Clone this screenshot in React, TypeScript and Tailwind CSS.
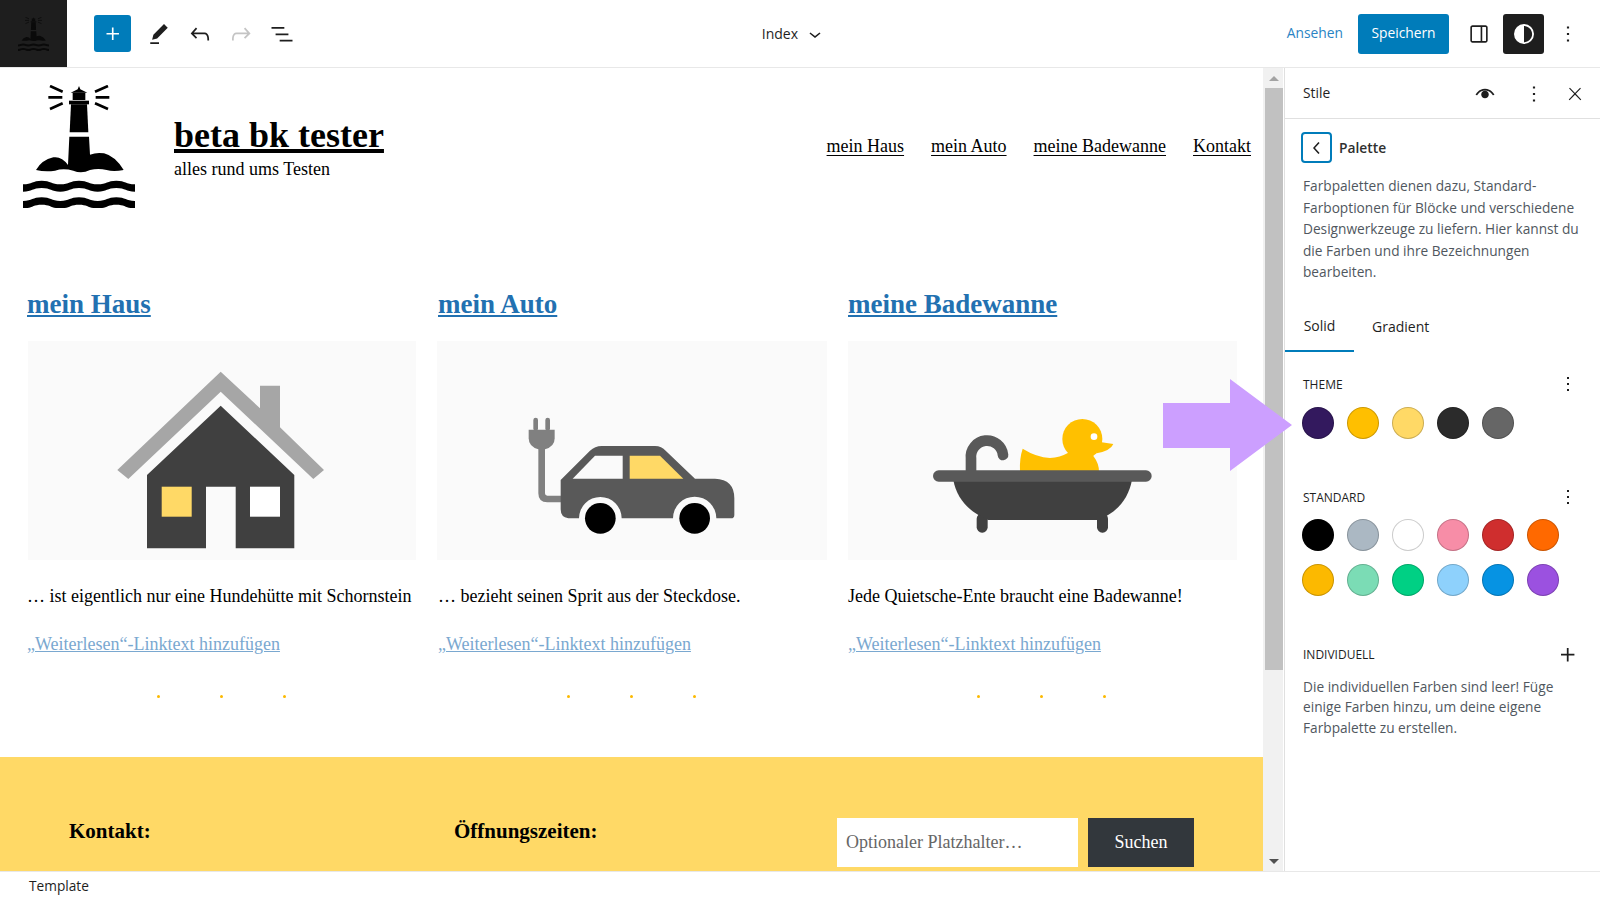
const WP = ({ d, size = 28, className = "", rule }: { d: string; size?: number; className?: string; rule?: "evenodd" }) => (
  <svg width={size} height={size} viewBox="0 0 24 24" className={className} fill="currentColor">
    <path d={d} fillRule={rule} clipRule={rule} />
  </svg>
);

const icons = {
  plus: "M11 12.5V17.5H12.5V12.5H17.5V11H12.5V6H11V11H6V12.5H11Z",
  pencil: "m19 7-3-3-8.5 8.5-1 4 4-1L19 7Zm-7 11.5H5V20h7v-1.5Z",
  undo: "M18.3 11.7c-.6-.6-1.4-.9-2.3-.9H6.7l2.9-3.3-1.1-1-4.5 5L8.5 16l1-1-2.7-2.7H16c.5 0 .9.2 1.3.5 1 1 1 3.4 1 4.5v.3h1.5v-.2c0-1.5 0-4.3-1.5-5.7z",
  redo: "M15.6 6.5l-1.1 1 2.9 3.3H8c-.9 0-1.7.3-2.3.9-1.4 1.5-1.4 4.2-1.4 5.6v.2h1.5v-.3c0-1.1 0-3.5 1-4.5.3-.3.7-.5 1.3-.5h9.2L14.5 15l1.1 1.1 4.6-4.6-4.6-5z",
  list: "M3 6h11v1.5H3V6Zm3.5 5.5h11V13h-11v-1.5ZM21 17H10v1.5h11V17Z",
  drawer: "M18 4H6c-1.1 0-2 .9-2 2v12c0 1.1.9 2 2 2h12c1.1 0 2-.9 2-2V6c0-1.1-.9-2-2-2zM6 5.5h7.5v13H6c-.3 0-.5-.2-.5-.5V6c0-.3.2-.5.5-.5zM18.5 18c0 .3-.2.5-.5.5h-3v-13h3c.3 0 .5.2.5.5v12z",
  styles: "M12 4a8 8 0 1 0 0 16 8 8 0 0 0 0-16zm0 1.5c3.6 0 6.5 2.9 6.5 6.5s-2.9 6.5-6.5 6.5v-13z",
  more: "M13 19h-2v-2h2v2zm0-6h-2v-2h2v2zm0-6h-2V5h2v2z",
  close: "M13 11.8l6.1-6.3-1-1-6.1 6.2-6.1-6.2-1 1 6.1 6.3-6.5 6.7 1 1 6.5-6.6 6.5 6.6 1-1z",
  left: "M14.6 7l-1.2-1L8 12l5.4 6 1.2-1-4.6-5z",
  down: "M17.5 11.6L12 16l-5.5-4.4.9-1.2L12 14l4.5-3.6 1 1.2z",
  eye: "M3.99961 13C4.67043 13.3354 4.6703 13.3357 4.67017 13.3359L4.67298 13.3305C4.67621 13.3242 4.68184 13.3135 4.68988 13.2985C4.70595 13.2686 4.7316 13.2218 4.76695 13.1608C4.8377 13.0385 4.94692 12.8592 5.09541 12.6419C5.39312 12.2062 5.84436 11.624 6.45435 11.0431C7.67308 9.88241 9.49719 8.75 11.9996 8.75C14.502 8.75 16.3261 9.88241 17.5449 11.0431C18.1549 11.624 18.6061 12.2062 18.9038 12.6419C19.0523 12.8592 19.1615 13.0385 19.2323 13.1608C19.2676 13.2218 19.2933 13.2686 19.3093 13.2985C19.3174 13.3135 19.323 13.3242 19.3262 13.3305L19.3291 13.3359C19.3289 13.3357 19.3288 13.3354 19.9996 13C20.6704 12.6646 20.6703 12.6643 20.6701 12.664L20.6697 12.6632L20.6688 12.6614L20.6662 12.6563L20.6583 12.6408C20.6517 12.6282 20.6427 12.6108 20.631 12.5892C20.6078 12.5459 20.5744 12.4852 20.5306 12.4096C20.4432 12.2584 20.3141 12.0471 20.1423 11.7956C19.7994 11.2938 19.2819 10.626 18.5794 9.9569C17.1731 8.61759 15.0306 7.25 11.9996 7.25C8.96859 7.25 6.82609 8.61759 5.41987 9.9569C4.71736 10.626 4.19984 11.2938 3.85694 11.7956C3.68511 12.0471 3.55605 12.2584 3.4686 12.4096C3.42484 12.4852 3.39142 12.5459 3.36818 12.5892C3.35656 12.6108 3.34748 12.6282 3.34092 12.6408L3.33297 12.6563L3.33041 12.6614L3.32948 12.6632L3.32911 12.664C3.32894 12.6643 3.32879 12.6646 3.99961 13ZM11.9996 16C13.9326 16 15.4996 14.433 15.4996 12.5C15.4996 10.567 13.9326 9 11.9996 9C10.0666 9 8.49961 10.567 8.49961 12.5C8.49961 14.433 10.0666 16 11.9996 16Z",
};

const Lighthouse = ({ w, h, color, className = "" }: { w: number; h: number; color: string; className?: string }) => (
  <svg width={w} height={h} viewBox="69 45 336 369" className={className} fill={color}>
    <g stroke={color} strokeWidth="8" fill="none">
      <path d="M150 48L188 65M145 82H187M150 117L188 100M324 48L285 65M328 82H287M324 117L285 100" />
    </g>
    <path d="M237 48L241 58L262 68H212L233 58Z" />
    <rect x="218" y="68" width="38" height="22" />
    <rect x="207" y="92" width="60" height="11" />
    <path d="M213 103H261L265 187H209Z" />
    <path d="M208 200H267L270 254Q290 246 312 250Q345 258 371 300Q340 306 320 300Q295 294 270 300Q245 312 220 302Q190 294 165 302Q135 306 108 300Q125 270 160 262Q185 258 204 285Z" />
    <path d="M69 343c28 0 28 -11 56 -11s28 11 56 11c28 0 28 -11 56 -11s28 11 56 11c28 0 28 -11 56 -11s28 11 56 11V365c-28 0 -28 -11 -56 -11s-28 11 -56 11c-28 0 -28 -11 -56 -11s-28 11 -56 11c-28 0 -28 -11 -56 -11s-28 11 -56 11Z" />
    <path d="M69 393c28 0 28 -11 56 -11s28 11 56 11c28 0 28 -11 56 -11s28 11 56 11c28 0 28 -11 56 -11s28 11 56 11V415c-28 0 -28 -11 -56 -11s-28 11 -56 11c-28 0 -28 -11 -56 -11s-28 11 -56 11c-28 0 -28 -11 -56 -11s-28 11 -56 11Z" />
  </svg>
);

const House = () => (
  <svg viewBox="28 341 388 219" className="block w-full h-full">
    <polygon fill="#a6a6a6" points="220.7,371.7 260,408.3 260,385.7 280,385.7 280,427.3 324,470 313.3,479 220.7,391.7 128.3,479 117.3,470" />
    <polygon fill="#404040" points="220.7,405.7 294.3,475 294.3,548.3 235.7,548.3 235.7,486.7 206,486.7 206,548.3 147,548.3 147,475" />
    <rect x="161.7" y="486.7" width="30" height="30" fill="#ffd966" />
    <rect x="250" y="486.7" width="30" height="30" fill="#ffffff" />
  </svg>
);

const Car = () => (
  <svg viewBox="437 341 390 219" className="block w-full h-full">
    <g transform="translate(500 390) scale(0.33333)">
      <rect x="100" y="83" width="14" height="40" rx="7" fill="#808080" />
      <rect x="136" y="83" width="14" height="40" rx="7" fill="#808080" />
      <path d="M86 119H164V145Q164 170 135 178H115Q86 170 86 145Z" fill="#808080" />
      <path d="M125 175V310Q125 327 142 327H190" stroke="#808080" strokeWidth="20" fill="none" />
      <path d="M182 270L270 182Q285 168 305 168H465Q485 168 497 182L585 266H645Q703 268 703 325V375Q703 385 693 385H649A65 65 0 0 0 519 385H365A64 64 0 0 0 237 385H205Q182 382 182 358Z" fill="#595959" />
      <path d="M218 266L285 197H368V266Z" fill="#fafafa" />
      <path d="M389 197H480L550 266H389Z" fill="#ffd966" />
      <circle cx="301" cy="385" r="46" fill="#000" />
      <circle cx="584" cy="385" r="46" fill="#000" />
    </g>
  </svg>
);

const Tub = () => (
  <svg viewBox="848 341 389 219" className="block w-full h-full">
    <g transform="translate(920 400) scale(0.33333)">
      <path d="M153 215V175A48 48 0 0 1 249 165" stroke="#595959" strokeWidth="32" fill="none" strokeLinecap="round" />
      <circle cx="487" cy="117" r="60" fill="#ffc000" />
      <path d="M535 125L580 132Q572 152 530 160Z" fill="#ffc000" />
      <path d="M300 215Q298 175 308 146Q350 172 390 174Q420 172 445 158L520 168Q537 190 537 215Z" fill="#ffc000" />
      <circle cx="522" cy="110" r="10" fill="#fff" />
      <rect x="170" y="340" width="33" height="58" rx="16" fill="#404040" />
      <rect x="531" y="340" width="33" height="58" rx="16" fill="#404040" />
      <path d="M100 240H636C625 295 595 335 535 360H205C145 335 110 295 100 240Z" fill="#404040" />
      <rect x="39" y="211" width="656" height="34" rx="17" fill="#595959" />
    </g>
  </svg>
);

const Swatch = ({ c }: { c: string }) => (
  <div className="w-8 h-8 rounded-full border border-black/20" style={{ backgroundColor: c }} />
);

const columns = [
  { title: "mein Haus", text: "… ist eigentlich nur eine Hundehütte mit Schornstein", art: <House />, box: "ml-px w-[388px]", dots: "pl-[130px]" },
  { title: "mein Auto", text: "… bezieht seinen Sprit aus der Steckdose.", art: <Car />, box: "-ml-px w-[390px]", dots: "pl-[129px]" },
  { title: "meine Badewanne", text: "Jede Quietsche-Ente braucht eine Badewanne!", art: <Tub />, box: "w-[389px]", dots: "pl-[129px]" },
];

const SectionHead = ({ label, plus }: { label: string; plus?: boolean }) => (
  <div className="flex items-center justify-between h-6 pl-[18px] pr-[20px]">
    <span className="text-[12px] text-[#1e1e1e] uppercase">{label}</span>
    <WP d={plus ? icons.plus : icons.more} size={plus ? 28 : 24} className={plus ? "text-[#1e1e1e] -mr-[2px]" : "text-[#1e1e1e] -mt-[2px]"} />
  </div>
);

export default function App() {
  const serif = { fontFamily: '"Liberation Serif", "Times New Roman", serif' };
  return (
    <div className="relative w-[1600px] h-[900px] overflow-hidden bg-white flex flex-col font-['Open_Sans','Noto_Sans',sans-serif]">
      <header className="h-[68px] shrink-0 flex items-center border-b border-[#e8e8e8] bg-white">
        <div className="w-[67px] h-[67px] bg-[#1e1e1e] flex items-center justify-center">
          <Lighthouse w={31} h={34} color="#0a0a0a" />
        </div>
        <button className="ml-[27px] w-[37px] h-[37px] bg-[#007cba] rounded-[3px] flex items-center justify-center text-white">
          <WP d={icons.plus} size={26} />
        </button>
        <div className="ml-[7px] flex items-center text-[#1e1e1e]">
          <div className="w-[41px] flex justify-center"><WP d={icons.pencil} size={30} /></div>
          <div className="w-[41px] flex justify-center"><WP d={icons.undo} /></div>
          <div className="w-[41px] flex justify-center text-[#c4c4c4]"><WP d={icons.redo} /></div>
          <div className="w-[41px] flex justify-center"><WP d={icons.list} /></div>
        </div>
        <div className="flex-1 flex items-center justify-center text-[14px] text-[#1e1e1e]">
          <span>Index</span>
          <WP d={icons.down} size={24} className="ml-[5px]" />
        </div>
        <span className="text-[13.8px] text-[#2a84c4] mr-[15px]">Ansehen</span>
        <button className="w-[91px] h-[40px] bg-[#007cba] rounded-[3px] text-white text-[13.8px]">Speichern</button>
        <div className="ml-[9px] w-[41px] flex justify-center text-[#1e1e1e]"><WP d={icons.drawer} size={26} /></div>
        <div className="ml-[4px] w-[41px] h-[40px] bg-[#1e1e1e] rounded-[3px] flex items-center justify-center text-white"><WP d={icons.styles} size={30} rule="evenodd" /></div>
        <div className="ml-[3px] mr-[12px] w-[41px] flex justify-center text-[#1e1e1e]"><WP d={icons.more} size={26} /></div>
      </header>

      <div className="flex-1 flex min-h-0">
        <main className="w-[1263px] h-full overflow-hidden flex flex-col text-black" style={serif}>
          <div className="flex items-start pt-[17px] pl-[23px] pr-[12px] shrink-0">
            <Lighthouse w={112} h={123} color="#000" />
            <div className="ml-[39px] mt-[30px]">
              <div className="text-[36px] leading-[40px] font-bold underline decoration-[4px] underline-offset-[2px]">beta bk tester</div>
              <div className="mt-[2px] text-[18px] leading-6">alles rund ums Testen</div>
            </div>
            <nav className="ml-auto mt-[49px] flex gap-[27px] text-[18px] leading-6 underline underline-offset-[3px]">
              <span>mein Haus</span>
              <span>mein Auto</span>
              <span>meine Badewanne</span>
              <span>Kontakt</span>
            </nav>
          </div>

          <div className="mt-[78px] pl-[27px] grid grid-cols-[390px_389px_389px] gap-x-[21px] shrink-0">
            {columns.map((c) => (
              <div key={c.title}>
                <div className="text-[27px] leading-9 font-bold text-[#2271b1] underline">{c.title}</div>
                <div className={`mt-[19px] h-[219px] bg-[#fafafa] ${c.box}`}>{c.art}</div>
                <p className="mt-6 text-[18px] leading-6 whitespace-nowrap">{c.text}</p>
                <p className="mt-6 text-[18px] leading-6 text-[#7aa8d0] underline">„Weiterlesen“-Linktext hinzufügen</p>
                <div className={`mt-[39px] h-[3px] flex gap-[60px] ${c.dots}`}>
                  <span className="w-[3px] h-[3px] rounded-full bg-[#fcb900]" />
                  <span className="w-[3px] h-[3px] rounded-full bg-[#fcb900]" />
                  <span className="w-[3px] h-[3px] rounded-full bg-[#fcb900]" />
                </div>
              </div>
            ))}
          </div>

          <footer className="mt-[59px] flex-1 min-h-0 bg-[#ffd966] flex items-start pl-[69px]">
            <div className="w-[385px] mt-[60px] text-[21px] leading-7 font-bold">Kontakt:</div>
            <div className="w-[383px] mt-[60px] text-[21px] leading-7 font-bold">Öffnungszeiten:</div>
            <div className="mt-[61px] w-[241px] h-[49px] bg-white flex items-center pl-[9px] text-[18px] text-[#666]">Optionaler Platzhalter…</div>
            <button className="mt-[61px] ml-[10px] w-[106px] h-[49px] bg-[#32373c] text-white text-[18px]">Suchen</button>
          </footer>
        </main>

        <div className="w-[20px] mr-px shrink-0 bg-[#f1f1f1] flex flex-col">
          <div className="h-[20px] pl-[2px] flex items-center justify-center">
            <div className="w-0 h-0 border-x-[5px] border-x-transparent border-b-[5px] border-b-[#a3a3a3]" />
          </div>
          <div className="ml-[2px] h-[582px] bg-[#c1c1c1]" />
          <div className="flex-1" />
          <div className="h-[20px] pl-[2px] flex items-center justify-center">
            <div className="w-0 h-0 border-x-[5px] border-x-transparent border-t-[5px] border-t-[#505050]" />
          </div>
        </div>

        <aside className="w-[316px] shrink-0 border-l border-[#e0e0e0] flex flex-col bg-white">
          <div className="h-[51px] shrink-0 border-b border-[#e0e0e0] flex items-center pl-[18px] pt-px text-[#1e1e1e]">
            <span className="w-[27px] text-[13.8px] font-medium">Stile</span>
            <WP d={icons.eye} size={26} className="ml-[142px]" />
            <WP d={icons.more} size={26} className="ml-[23px]" />
            <WP d={icons.close} size={20} className="ml-[18px]" />
          </div>
          <div className="mt-[13px] flex items-center pl-[16px]">
            <div className="w-[31px] h-[31px] border-2 border-[#007cba] rounded-[4px] flex items-center justify-center text-[#1e1e1e]">
              <WP d={icons.left} size={24} />
            </div>
            <span className="ml-[7px] pt-px text-[13.8px] font-semibold text-[#2f2f2f]">Palette</span>
          </div>
          <p className="mt-[12px] pl-[18px] pr-[12px] text-[13.7px] leading-[21.6px] text-[#50575e]">
            Farbpaletten dienen dazu, Standard-Farboptionen für Blöcke und verschiedene Designwerkzeuge zu liefern. Hier kannst du die Farben und ihre Bezeichnungen bearbeiten.
          </p>
          <div className="mt-[19px] flex h-[50px] text-[14px] text-[#1e1e1e]">
            <div className="w-[69px] flex items-center justify-center border-b-2 border-[#007cba] font-medium">Solid</div>
            <div className="px-[18px] flex items-center font-medium">Gradient</div>
          </div>

          <div className="mt-[21px]"><SectionHead label="Theme" /></div>
          <div className="mt-[10px] pl-[17px] flex gap-[13px]">
            {["#33195e", "#ffbf00", "#ffd966", "#2b2b2b", "#666666"].map((c) => <Swatch key={c} c={c} />)}
          </div>

          <div className="mt-[47px]"><SectionHead label="Standard" /></div>
          <div className="mt-[9px] pl-[17px] grid grid-cols-[repeat(6,32px)] gap-[13px]">
            {["#000000", "#abb8c3", "#ffffff", "#f78da7", "#cf2e2e", "#ff6900", "#fcb900", "#7bdcb5", "#00d084", "#8ed1fc", "#0693e3", "#9b51e0"].map((c) => <Swatch key={c} c={c} />)}
          </div>

          <div className="mt-[47px]"><SectionHead label="Individuell" plus /></div>
          <p className="mt-[10px] pl-[18px] pr-[20px] text-[13.7px] leading-[20.4px] text-[#50575e]">
            Die individuellen Farben sind leer! Füge einige Farben hinzu, um deine eigene Farbpalette zu erstellen.
          </p>
        </aside>
      </div>

      <div className="h-[29px] shrink-0 border-t border-[#e8e8e8] flex items-center pl-[29px] text-[13.7px] text-[#1e1e1e]">Template</div>

      <svg width="129" height="92" viewBox="0 0 129 92" className="absolute left-[1163px] top-[379px]">
        <polygon points="0,24 67,24 67,0 129,46 67,92 67,69 0,69" fill="#cc9fff" />
      </svg>
    </div>
  );
}
